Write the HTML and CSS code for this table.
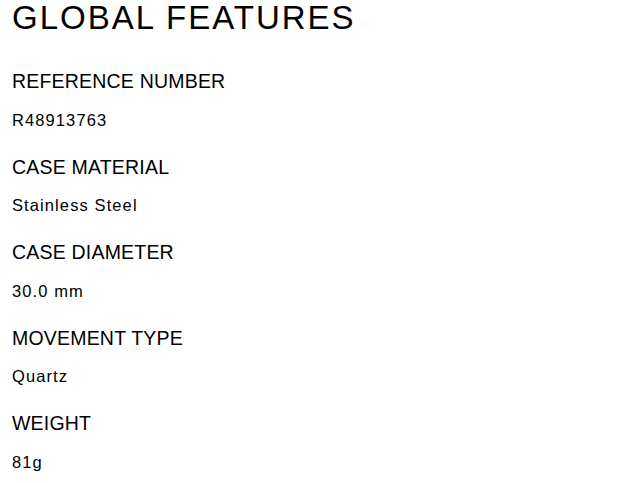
FILE: index.html
```html
<!DOCTYPE html>
<html>
<head>
<meta charset="utf-8">
<link rel="stylesheet" href="styles.css">
</head>
<body>
<section class="features">
  <h1 class="title">GLOBAL FEATURES</h1>
  <dl class="specs">
    <div class="spec"><dt class="label">REFERENCE NUMBER</dt><dd class="value">R48913763</dd></div>
    <div class="spec"><dt class="label">CASE MATERIAL</dt><dd class="value">Stainless Steel</dd></div>
    <div class="spec"><dt class="label">CASE DIAMETER</dt><dd class="value">30.0 mm</dd></div>
    <div class="spec"><dt class="label">MOVEMENT TYPE</dt><dd class="value">Quartz</dd></div>
    <div class="spec"><dt class="label">WEIGHT</dt><dd class="value">81g</dd></div>
  </dl>
</section>
</body>
</html>
```
FILE: styles.css
```css
html, body {
  margin: 0;
  padding: 0;
  background: #fff;
}
body {
  font-family: "Liberation Sans", Arial, sans-serif;
  color: #000;
}
.features {
  padding: 1px 12px 0;
}
.title {
  margin: 0;
  font-size: 33px;
  line-height: 33px;
  font-weight: normal;
  letter-spacing: 2px;
}
.specs {
  margin: 0;
  padding-top: 35.4px;
  display: flex;
  flex-direction: column;
  gap: 24.9px;
}
.spec {
  display: flex;
  flex-direction: column;
  gap: 16.6px;
}
.label {
  font-size: 19.5px;
  line-height: 24px;
  letter-spacing: 0.2px;
}
.value {
  margin: 0;
  font-size: 16.5px;
  line-height: 20px;
  letter-spacing: 1.1px;
}
```
